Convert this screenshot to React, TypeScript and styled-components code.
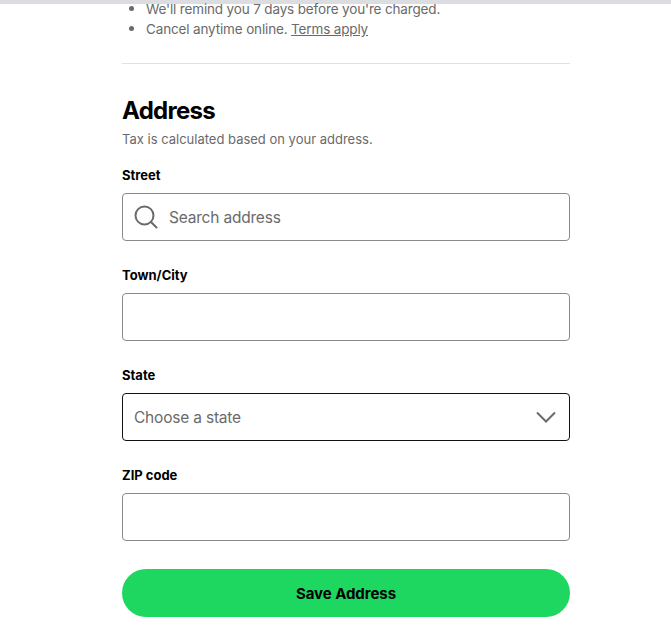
import React from "react";
import styled, { createGlobalStyle } from "styled-components";

const Global = createGlobalStyle`
  html, body { margin: 0; padding: 0; background: #fff; }
  body { font-family: Inter, "Liberation Sans", sans-serif; overflow: hidden; }
`;
const TopBar = styled.div`height: 4px; background: #dcdde1;`;
const Page = styled.main`width: 448px; padding: 0 0 19px 122px;`;
const Bullets = styled.ul`
  margin: -5px 0 0; padding: 0 0 0 24px; color: #6a6a6a; font-size: 13.5px; line-height: 20px;
  li { height: 20px; letter-spacing: -0.15px; }
  li::marker { color: #6a6a6a; font-size: 15px; }
`;
const TermsLink = styled.a`color: #6a6a6a; text-decoration: underline;`;
const Divider = styled.hr`border: 0; border-top: 1px solid #e1e1e1; margin: 24px 0 0;`;
const Heading = styled.h2`margin: 31px 0 0; font-size: 24px; line-height: 32px; font-weight: 700; color: #000; letter-spacing: -0.7px;`;
const Note = styled.p`margin: 2px 0 0; font-size: 13px; line-height: 20px; color: #6a6a6a; letter-spacing: 0;`;
const Field = styled.div<{ $top: number }>`margin-top: ${(p) => p.$top}px;`;
const Label = styled.label`display: block; font-size: 13px; line-height: 16px; font-weight: 700; color: #000; letter-spacing: 0; margin-bottom: 10px;`;
const Control = styled.div<{ $dark?: boolean }>`
  box-sizing: border-box; height: 48px; display: flex; align-items: center; gap: 11px;
  padding: 0 13px 0 11px; border: 1px solid ${(p) => (p.$dark ? "#121212" : "#8a8a8a")}; border-radius: 4px; background: #fff;
`;
const TextInput = styled.input`
  flex: 1; min-width: 0; border: 0; outline: 0; padding: 0; background: transparent; font: inherit; font-size: 15.5px; color: #000;
  letter-spacing: -0.2px;
  &::placeholder { color: #6a6a6a; opacity: 1; }
`;
const SelectText = styled.span`flex: 1; font-size: 15.5px; color: #6a6a6a; letter-spacing: -0.2px;`;
const SaveButton = styled.button`
  display: block; width: 100%; height: 48px; margin-top: 28px; border: 0; border-radius: 24px; background: #1ed760;
  color: #000; font: inherit; font-size: 15px; font-weight: 700; letter-spacing: -0.05px;
`;

export default function App() {
  return (
    <>
      <Global />
      <TopBar />
      <Page>
        <Bullets>
          <li>We'll remind you 7 days before you're charged.</li>
          <li>Cancel anytime online. <TermsLink href="#">Terms apply</TermsLink></li>
        </Bullets>
        <Divider />
        <Heading>Address</Heading>
        <Note>Tax is calculated based on your address.</Note>
        <Field $top={18}>
          <Label>Street</Label>
          <Control>
            <svg width="24" height="24" viewBox="0 0 24 24" fill="none" stroke="#6a6a6a" strokeWidth="2" strokeLinecap="round">
              <circle cx="10.5" cy="10.5" r="9" />
              <path d="M17 17L22.5 22.5" />
            </svg>
            <TextInput placeholder="Search address" />
          </Control>
        </Field>
        <Field $top={26}>
          <Label>Town/City</Label>
          <Control><TextInput /></Control>
        </Field>
        <Field $top={26}>
          <Label>State</Label>
          <Control $dark>
            <SelectText>Choose a state</SelectText>
            <svg width="20" height="12" viewBox="0 0 20 12" fill="none" stroke="#6a6a6a" strokeWidth="2">
              <path d="M1 1.5L10 10.5L19 1.5" />
            </svg>
          </Control>
        </Field>
        <Field $top={26}>
          <Label>ZIP code</Label>
          <Control><TextInput /></Control>
        </Field>
        <SaveButton>Save Address</SaveButton>
      </Page>
    </>
  );
}
